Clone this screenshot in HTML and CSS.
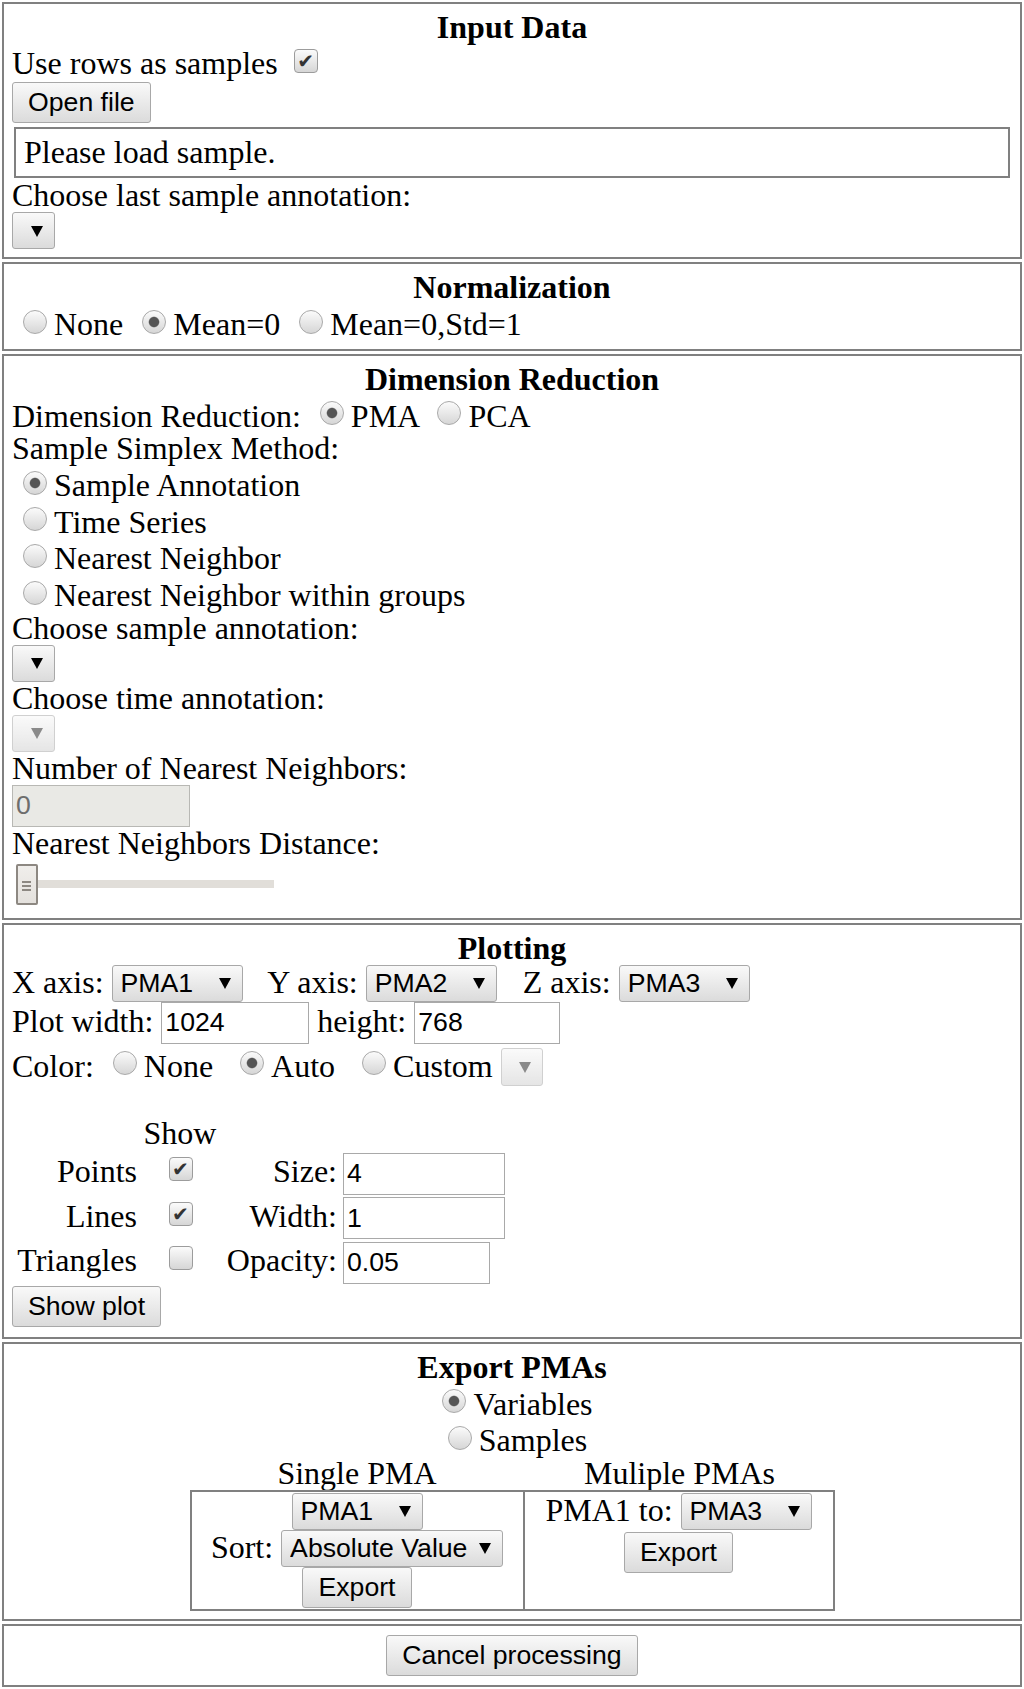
FILE: index.html
```html
<!DOCTYPE html>
<html lang="en">
<head>
<meta charset="utf-8">
<title>PMA</title>
<link rel="stylesheet" href="styles.css">
</head>
<body>
<section class="panel">
  <div class="title">Input Data</div>
  <div>Use rows as samples <input type="checkbox" class="cb" checked></div>
  <div class="btn-row"><button class="btn">Open file</button></div>
  <div class="status">Please load sample.</div>
  <div>Choose last sample annotation:</div>
  <div><span class="sel w-empty"><select></select></span></div>
</section>

<section class="panel">
  <div class="title">Normalization</div>
  <div><input type="radio" class="rb" name="norm">None <input type="radio" class="rb" name="norm" checked>Mean=0 <input type="radio" class="rb" name="norm">Mean=0,Std=1</div>
</section>

<section class="panel">
  <div class="title">Dimension Reduction</div>
  <div>Dimension Reduction: <input type="radio" class="rb" name="dr" checked>PMA <input type="radio" class="rb" name="dr">PCA</div>
  <div>Sample Simplex Method:</div>
  <div><input type="radio" class="rb" name="ssm" checked>Sample Annotation</div>
  <div><input type="radio" class="rb" name="ssm">Time Series</div>
  <div><input type="radio" class="rb" name="ssm">Nearest Neighbor</div>
  <div><input type="radio" class="rb" name="ssm">Nearest Neighbor within groups</div>
  <div>Choose sample annotation:</div>
  <div><span class="sel w-empty"><select></select></span></div>
  <div>Choose time annotation:</div>
  <div><span class="sel w-empty disabled"><select disabled></select></span></div>
  <div>Number of Nearest Neighbors:</div>
  <div><input type="text" class="txt w-nn" value="0" disabled></div>
  <div>Nearest Neighbors Distance:</div>
  <input type="range" class="range" min="0" max="100" value="0">
</section>

<section class="panel plot">
  <div class="title">Plotting</div>
  <div>X axis: <span class="sel w-pma axis"><select><option>PMA1</option></select></span>&nbsp;&nbsp; Y axis: <span class="sel w-pma axis"><select><option>PMA2</option></select></span>&nbsp;&nbsp; Z axis: <span class="sel w-pma"><select><option>PMA3</option></select></span></div>
  <div class="size-row">Plot width: <input type="text" class="txt w-pw" value="1024"> height: <input type="text" class="txt w-ph" value="768"></div>
  <div><span>Color: </span><input type="radio" class="rb" name="color">None&nbsp; <input type="radio" class="rb" name="color" checked>Auto&nbsp; <input type="radio" class="rb" name="color">Custom <span class="sel w-cust disabled"><select disabled></select></span></div>
  <div class="opts">
    <span></span><span class="oc">Show</span><span></span><span></span>
    <span class="or">Points</span><span class="oc"><input type="checkbox" class="cb" checked></span><span class="or">Size:</span><span class="ol"><input type="text" class="txt w-size" value="4"></span>
    <span class="or">Lines</span><span class="oc"><input type="checkbox" class="cb" checked></span><span class="or">Width:</span><span class="ol"><input type="text" class="txt w-size" value="1"></span>
    <span class="or">Triangles</span><span class="oc"><input type="checkbox" class="cb"></span><span class="or">Opacity:</span><span class="ol"><input type="text" class="txt w-op" value="0.05"></span>
  </div>
  <div class="btn-row"><button class="btn">Show plot</button></div>
</section>

<section class="panel center">
  <div class="title">Export PMAs</div>
  <div><input type="radio" class="rb" name="exp" checked>Variables</div>
  <div><input type="radio" class="rb" name="exp">Samples</div>
  <div class="export">
    <div class="eh">Single PMA</div>
    <div class="eh">Muliple PMAs</div>
    <div class="ecell ecell-l">
      <div><span class="sel w-pma"><select><option>PMA1</option></select></span></div>
      <div>Sort: <span class="sel w-abs"><select><option>Absolute Value</option></select></span></div>
      <div><button class="btn">Export</button></div>
    </div>
    <div class="ecell ecell-r">
      <div>PMA1 to: <span class="sel w-pma"><select><option>PMA3</option></select></span></div>
      <div class="btn-row2"><button class="btn">Export</button></div>
    </div>
  </div>
</section>

<section class="panel center last">
  <button class="btn">Cancel processing</button>
</section>
</body>
</html>
```

FILE: styles.css
```css
* {
  box-sizing: border-box;
}

html,
body {
  margin: 0;
  padding: 0;
  background: #ffffff;
}

body {
  font-family: "Liberation Serif", "Times New Roman", serif;
  font-size: 32px;
  line-height: 33px;
  color: #000000;
}

.panel {
  border: 2px solid #808080;
  margin: 2px;
  padding: 7px 8px 8px;
}

.panel + .panel {
  margin-top: 3px;
}

.panel.plot {
  padding-bottom: 10px;
}

.panel.last {
  padding-top: 9px;
  padding-bottom: 9px;
}

.title {
  font-weight: bold;
  text-align: center;
}

.center {
  text-align: center;
}

/* radio buttons and checkboxes */
.rb,
.cb {
  -webkit-appearance: none;
  appearance: none;
  display: inline-block;
  position: relative;
  width: 24px;
  height: 24px;
  margin: 5.6px 7px 0 11px;
  vertical-align: 1px;
  border: 1px solid #a9a9a9;
  background: linear-gradient(#fbfbfb, #d6d6d6);
}

.rb {
  border-radius: 50%;
}

.rb:checked {
  background: radial-gradient(circle, #555555 0, #555555 4.6px, rgba(85, 85, 85, 0) 5.8px),
    linear-gradient(#fbfbfb, #d6d6d6);
}

.cb {
  width: 24px;
  height: 24px;
  margin: 5px 7px 0 8px;
  border-radius: 4px;
  border-color: #9c9c9c;
}

.cb:checked::after {
  content: "\2714";
  position: absolute;
  left: 0;
  top: 0;
  width: 22px;
  height: 22px;
  text-align: center;
  font-family: "DejaVu Sans", sans-serif;
  font-size: 20px;
  line-height: 22px;
  color: #333333;
}

/* buttons */
.btn {
  font-family: "Liberation Sans", Arial, sans-serif;
  font-size: 26.67px;
  line-height: normal;
  height: 41px;
  margin: 0;
  padding: 0 15px;
  border: 1px solid #a8a8a8;
  border-radius: 3px;
  background: linear-gradient(#f9f9f9, #dbdbdb);
  color: #000000;
  vertical-align: baseline;
}

.btn-row {
  margin-top: 2px;
}

.btn-row2 {
  margin-top: 2px;
}

/* status box */
.status {
  height: 51px;
  margin: 4px 2px 1px;
  padding: 0 8px;
  border: 2px solid #808080;
  line-height: 47px;
}

/* select boxes */
.sel {
  position: relative;
  display: inline-block;
  vertical-align: baseline;
}

.sel.axis {
  margin-right: 2px;
}

.sel select {
  -webkit-appearance: none;
  appearance: none;
  font-family: "Liberation Sans", Arial, sans-serif;
  font-size: 26.67px;
  height: 37px;
  margin: 0;
  padding: 0 0 0 8px;
  border: 1px solid #a8a8a8;
  border-radius: 3px;
  background: linear-gradient(#f9f9f9, #dbdbdb);
  color: #000000;
}

.sel::after {
  content: "";
  position: absolute;
  right: 12px;
  top: 50%;
  margin-top: -5px;
  width: 0;
  height: 0;
  border-left: 6px solid transparent;
  border-right: 6px solid transparent;
  border-top: 11px solid #000000;
  pointer-events: none;
}

.sel.disabled::after {
  border-top-color: #8a8a8a;
}

.sel.disabled select {
  border-color: #bdbdbd;
  color: #8a8a8a;
}

.w-empty select {
  width: 43px;
}

.w-pma select {
  width: 131px;
}

.w-abs select {
  width: 222px;
}

.w-cust select {
  width: 42px;
  height: 38px;
}

/* text inputs */
.txt {
  font-family: "Liberation Sans", Arial, sans-serif;
  font-size: 26.67px;
  height: 42px;
  margin: 0;
  padding: 0 3px;
  border: 1px solid #a9a9a9;
  background: #ffffff;
  color: #000000;
  vertical-align: baseline;
}

.txt:disabled {
  background: #e9e9e5;
  border-color: #b8b8b4;
  color: #6d6d6d;
}

.w-nn {
  width: 178px;
}

.w-pw {
  width: 148px;
}

.w-ph {
  width: 146px;
}

.w-size {
  width: 162px;
}

.w-op {
  width: 147px;
}

.size-row {
  margin-bottom: 2px;
}

/* range slider */
.range {
  -webkit-appearance: none;
  appearance: none;
  display: block;
  width: 258px;
  height: 41px;
  margin: 4px 0 5px 4px;
  padding: 0;
  background: transparent;
}

.range::-webkit-slider-runnable-track {
  height: 8px;
  background: #e1ded9;
  border: none;
}

.range::-webkit-slider-thumb {
  -webkit-appearance: none;
  appearance: none;
  width: 22px;
  height: 41px;
  margin-top: -16.5px;
  border: 2px solid #8d8882;
  border-radius: 2px;
  background:
    linear-gradient(#8d8882, #8d8882) 4px 15px / 9px 2px no-repeat,
    linear-gradient(#8d8882, #8d8882) 4px 19px / 9px 2px no-repeat,
    linear-gradient(#8d8882, #8d8882) 4px 23px / 9px 2px no-repeat,
    linear-gradient(#f0eeeb, #e4e1dd);
}

/* plotting options grid */
.opts {
  display: grid;
  grid-template-columns: 123px 78px 114px auto;
  column-gap: 4px;
  row-gap: 2px;
  align-items: baseline;
  margin: 31px 0 0 2px;
}

.or {
  text-align: right;
}

.oc {
  text-align: center;
}

.ol {
  text-align: left;
  padding-left: 2px;
}

/* export table */
.export {
  display: grid;
  grid-template-columns: 335px 310px;
  justify-content: center;
}

.eh {
  text-align: center;
}

.ecell {
  border: 2px solid #808080;
  padding: 1px 0;
  text-align: center;
}

.ecell-r {
  border-left: none;
}
```
